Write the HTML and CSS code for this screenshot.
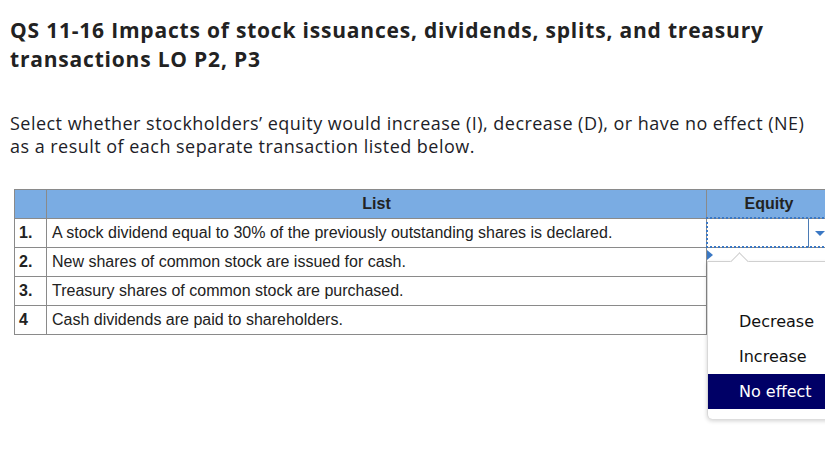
FILE: index.html
```html
<!DOCTYPE html>
<html>
<head>
<meta charset="utf-8">
<link rel="stylesheet" href="styles.css">
</head>
<body>
<div class="page">
  <h1 class="title">QS 11-16 Impacts of stock issuances, dividends, splits, and treasury transactions LO P2, P3</h1>
  <p class="intro">Select whether stockholders’ equity would increase (I), decrease (D), or have no effect (NE) as a result of each separate transaction listed below.</p>
  <table class="grid">
    <thead>
      <tr>
        <th class="num"></th>
        <th class="list">List</th>
        <th class="eq">Equity</th>
      </tr>
    </thead>
    <tbody>
      <tr>
        <td class="num">1.</td>
        <td class="list">A stock dividend equal to 30% of the previously outstanding shares is declared.</td>
        <td class="eq focus">
          <div class="select"><span class="value"></span><span class="arrow"></span></div>
          <div class="popup">
            <span class="marker"></span>
            <span class="notch"></span>
            <ul class="options">
              <li>Decrease</li>
              <li>Increase</li>
              <li class="selected">No effect</li>
            </ul>
          </div>
        </td>
      </tr>
      <tr>
        <td class="num">2.</td>
        <td class="list">New shares of common stock are issued for cash.</td>
        <td class="eq blank"></td>
      </tr>
      <tr>
        <td class="num">3.</td>
        <td class="list">Treasury shares of common stock are purchased.</td>
        <td class="eq blank"></td>
      </tr>
      <tr>
        <td class="num">4</td>
        <td class="list">Cash dividends are paid to shareholders.</td>
        <td class="eq blank"></td>
      </tr>
    </tbody>
  </table>
</div>
</body>
</html>
```

FILE: styles.css
```css
html, body {
  margin: 0;
  padding: 0;
  background: #fff;
  overflow: hidden;
}
.page {
  width: 825px;
  height: 465px;
  overflow: hidden;
  position: relative;
}
.title {
  margin: 0;
  padding: 16px 0 0 10px;
  font-family: "Open Sans", Lato, sans-serif;
  font-weight: 700;
  font-size: 21px;
  letter-spacing: 0.8px;
  line-height: 29px;
  color: #222;
  width: 790px;
}
.intro {
  margin: 0;
  padding: 38px 0 0 10px;
  font-family: "Open Sans", Lato, sans-serif;
  font-size: 18px;
  letter-spacing: 0.47px;
  line-height: 23px;
  color: #1d1d28;
  width: 798px;
}
.grid {
  margin: 31px 0 0 14px;
  border-collapse: collapse;
  font-family: "Liberation Sans", Arial, sans-serif;
  font-size: 16px;
  color: #222;
  table-layout: fixed;
  width: 816px;
}
.grid th, .grid td {
  border: 1px solid #8a8a8a;
  height: 28px;
  padding: 0;
}
.grid thead th {
  background: #7aacE3;
  font-weight: 700;
  font-size: 16px;
  color: #222;
  text-align: center;
}
.grid th.num, .grid td.num { width: 31px; }
.grid th.list { width: 659px; }
.grid th.eq { width: 124px; }
.grid td.num {
  font-weight: 700;
  padding-left: 4px;
  width: 27px;
}
.grid td.list {
  padding-left: 5px;
}
.grid td.blank {
  border: none;
}
.grid td.eq.focus {
  position: relative;
}
.grid td.eq.focus::before {
  content: "";
  position: absolute;
  left: -1px;
  top: -2px;
  right: -1px;
  bottom: -1px;
  border: 2px dotted #3b78c4;
  pointer-events: none;
}
.select {
  display: flex;
  height: 28px;
}
.value { flex: 1; }
.arrow {
  width: 22px;
  border-left: 1px solid #4b7bb5;
  position: relative;
}
.arrow::after {
  content: "";
  position: absolute;
  left: 6px;
  top: 12px;
  border-left: 5px solid transparent;
  border-right: 5px solid transparent;
  border-top: 5px solid #3b78c4;
}
.popup {
  position: absolute;
  left: 0;
  top: 42px;
  width: 140px;
  height: 157px;
  background: #fff;
  border-top: 1px solid #d0d0d0;
  border-left: 1px solid #d8d8d8;
  border-radius: 0 0 0 5px;
  box-shadow: 0 2px 4px rgba(0,0,0,0.18);
  z-index: 3;
}
.marker {
  position: absolute;
  left: -1px;
  top: -12px;
  width: 0;
  height: 0;
  border-top: 5px solid transparent;
  border-bottom: 5px solid transparent;
  border-left: 6px solid #3b78c4;
}
.notch {
  position: absolute;
  left: 25px;
  top: -7px;
  width: 12px;
  height: 12px;
  background: #fff;
  border-left: 1px solid #d0d0d0;
  border-top: 1px solid #d0d0d0;
  transform: rotate(45deg);
}
.options {
  list-style: none;
  margin: 0;
  padding: 42px 0 0 0;
  font-family: "DejaVu Sans", Verdana, sans-serif;
  font-size: 16px;
  color: #111;
}
.options li {
  height: 35px;
  line-height: 35px;
  padding-left: 31px;
}
.options li.selected {
  background: #000066;
  color: #fff;
}
```
